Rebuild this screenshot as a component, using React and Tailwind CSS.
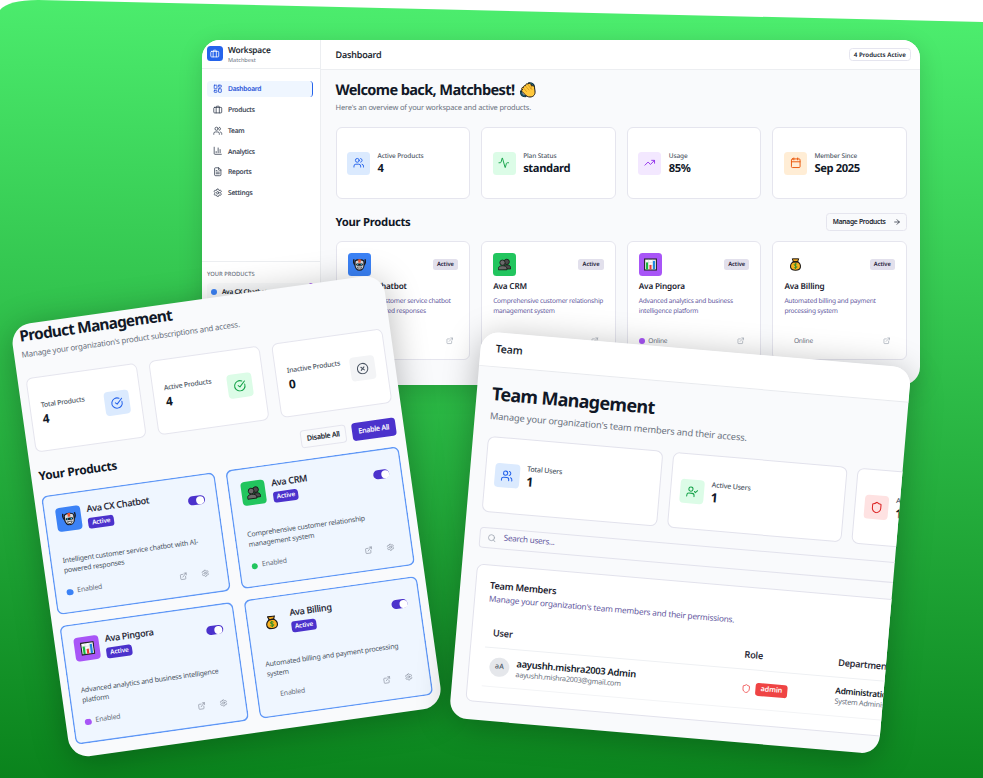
import React from "react";
import {
  Activity, ArrowRight, Calendar, ChartColumn, CircleCheckBig, CircleX,
  ExternalLink, FileText, LayoutDashboard, Search, Settings, Shield, TrendingUp,
  UserCheck, Users,
} from "lucide-react";

function Briefcase({ className }) {
  return (
    <svg viewBox="0 0 24 24" className={className} fill="none" stroke="currentColor" strokeWidth="2" strokeLinecap="round" strokeLinejoin="round">
      <rect x="2" y="6" width="20" height="14" rx="2" />
      <path d="M8 6V5a2 2 0 0 1 2-2h4a2 2 0 0 1 2 2v1M8 6v14M16 6v14" />
    </svg>
  );
}

function WaveEmoji({ className }) {
  return (
    <svg viewBox="0 0 32 32" className={className} strokeLinejoin="round" strokeLinecap="round">
      <path d="M18 3c5-1 10 2 10 8M2 19c0 6 4 9 9 9" fill="none" stroke="#12313f" strokeWidth="4.600" />
      <path d="M20 3c4 0 7 2 7 6M2 21c1 4 3 6 7 7" fill="none" stroke="#2b8fb0" strokeWidth="1.2" />
      <path d="M4 15c-2-3 1-5 3-4 0-3 1-4 4-4 0-3 3-4 5-3 2-2 4-2 6 1l1 3c2-1 6-1 6 3l1 7c1 7-3 12-10 12-4 0-8-2-10-5l-6-6c-1-2-1-3 0-4z" fill="#ffc83d" stroke="#1c1917" strokeWidth="2" />
      <path d="M7 12l6 7M11 8l7 8M16 5l6 9M23 8c-2 3-1 5 1 7" fill="none" stroke="#c98a12" strokeWidth="1.3" />
    </svg>
  );
}

function RobotEmoji({ className }) {
  return (
    <svg viewBox="0 0 32 32" className={className} strokeLinejoin="round">
      <path d="M2.500 3c-2 7 0 13 5 15M29.500 3c2 7 0 13-5 15" fill="none" stroke="#1b1b1f" strokeWidth="3.4" />
      <path d="M5 9c1-4 5-5 11-5s10 1 11 5v9c0 7-5 12-11 12S5 25 5 18z" fill="#d5d9dd" stroke="#17171b" strokeWidth="2.6" />
      <rect x="13" y="3" width="6" height="8.500" fill="#f0552f" />
      <rect x="7.500" y="13.500" width="17" height="5.500" rx="2.700" fill="#17171b" />
      <circle cx="11.500" cy="16.300" r="1.800" fill="#35c9e8" />
      <circle cx="20.500" cy="16.300" r="1.800" fill="#35c9e8" />
      <path d="M10.500 22.500h11l-2.500 4.500h-6z" fill="#fff" stroke="#17171b" strokeWidth="1.4" />
    </svg>
  );
}

function PeopleEmoji({ className }) {
  return (
    <svg viewBox="0 0 32 32" className={className} stroke="#151515" strokeWidth="2" strokeLinejoin="round">
      <circle cx="21.500" cy="9.500" r="6.500" fill="#4a4a4a" />
      <path d="M13 27v-3c0-5 4-7 9-7s9 2 9 7v3z" fill="#4a4a4a" />
      <circle cx="11" cy="11.500" r="6.500" fill="#6a6a6a" />
      <path d="M1 29v-3c0-5 4-7 10-7s11 2 11 7v3z" fill="#6a6a6a" />
    </svg>
  );
}

function ChartEmoji({ className }) {
  return (
    <svg viewBox="0 0 32 32" className={className}>
      <rect x="1.500" y="2.500" width="29" height="27" fill="#fafafa" stroke="#26262b" strokeWidth="2.800" />
      <path d="M3 11h26M3 19h26M11 4v24M21 4v24" stroke="#c9c9cf" strokeWidth="1" />
      <rect x="5" y="11" width="5" height="17" fill="#16b83f" />
      <rect x="13.500" y="17" width="5" height="11" fill="#ee3b32" />
      <rect x="22" y="7" width="5" height="21" fill="#1f86e0" />
    </svg>
  );
}

function MoneyEmoji({ className }) {
  return (
    <svg viewBox="0 0 32 32" className={className} strokeLinejoin="round">
      <path d="M8 2h16l-3 7H11z" fill="#f4a81d" stroke="#1c1917" strokeWidth="2.400" />
      <path d="M11 9C5 13 3 18 4 23c1 5 5 7 12 7s11-2 12-7c1-5-1-10-7-14z" fill="#fbb320" stroke="#1c1917" strokeWidth="2.600" />
      <path d="M9 9.500h14" stroke="#1c1917" strokeWidth="2.600" />
      <path d="M20 16c-1-2-7-2.500-7.500.5s7.500 2.500 7.500 5.500-6 3-8 .8M16 13v14" fill="none" stroke="#1f8b2c" strokeWidth="2" />
    </svg>
  );
}

const PRODUCTS = [
  { name: "Ava CX Chatbot", tile: "bg-[#3b82f6]", dot: "bg-[#3b82f6]", Emoji: RobotEmoji, short: ["Intelligent customer service chatbot", "with AI-powered responses"], long: ["Intelligent customer service chatbot with AI-", "powered responses"] },
  { name: "Ava CRM", tile: "bg-[#22c55e]", dot: "bg-[#22c55e]", Emoji: PeopleEmoji, short: ["Comprehensive customer relationship", "management system"], long: ["Comprehensive customer relationship", "management system"] },
  { name: "Ava Pingora", tile: "bg-[#a855f7]", dot: "bg-[#a855f7]", Emoji: ChartEmoji, short: ["Advanced analytics and business", "intelligence platform"], long: ["Advanced analytics and business intelligence", "platform"] },
  { name: "Ava Billing", tile: "", dot: "", Emoji: MoneyEmoji, short: ["Automated billing and payment", "processing system"], long: ["Automated billing and payment processing", "system"] },
];

const NAV = [
  ["Dashboard", LayoutDashboard],
  ["Products", Briefcase],
  ["Team", Users],
  ["Analytics", ChartColumn],
  ["Reports", FileText],
  ["Settings", Settings],
];

const STATS = [
  ["Active Products", "4", Users, "bg-[#dbeafe] text-[#2563eb]"],
  ["Plan Status", "standard", Activity, "bg-[#dcfce7] text-[#16a34a]"],
  ["Usage", "85%", TrendingUp, "bg-[#f3e8ff] text-[#9333ea]"],
  ["Member Since", "Sep 2025", Calendar, "bg-[#ffedd5] text-[#ea580c]"],
];

const MEDIUM = "font-medium [-webkit-text-stroke:0.12px] ";

function Sidebar() {
  return (
    <aside className="flex w-[119px] shrink-0 flex-col border-r border-[#eceef1] bg-white">
      <div className="flex h-[29px] shrink-0 items-center gap-[5.500px] border-b border-[#eceef1] pl-[5px]">
        <div className="mb-px flex size-[15.500px] items-center justify-center rounded-[3.500px] bg-[#2563eb] text-white">
          <Briefcase className="size-[9.500px]" />
        </div>
        <div className="pt-[2px]">
          <div className={MEDIUM + "text-[8.400px] leading-[10px] tracking-[-0.02em] text-[#111827]"}>Workspace</div>
          <div className="text-[5.600px] leading-[9px] text-[#6b7280]">Matchbest</div>
        </div>
      </div>
      <nav className="flex flex-col gap-[3.950px] pt-[11.500px] pr-[7.500px] pl-[5px]">
        {NAV.map(([label, Icon], i) => (
          <div
            key={label}
            className={
              MEDIUM + "flex h-[16.800px] items-center gap-[5.500px] rounded-[3.500px] pl-[6px] text-[6.700px] tracking-[-0.03em] " +
              (i === 0 ? "border-r border-[#2563eb] bg-[#eff6ff] text-[#1d4ed8]" : "text-[#374151]")
            }
          >
            <Icon className="size-[9.500px]" />
            <span className="pt-px">{label}</span>
          </div>
        ))}
      </nav>
      <div className="mt-[60px] flex-1 border-t border-[#eceef1] pt-[7px] pr-[7.500px] pl-[5px]">
        <div className="text-[5.800px] leading-[10px] font-medium text-[#6b7280]">YOUR PRODUCTS</div>
        <div className="mt-[4px] flex h-[18px] rounded-[3.500px] bg-[#f9fafb] pl-[4px]">
          <span className="mt-[6px] size-[6px] rounded-full bg-[#3b82f6]" />
          <span className="ml-[5px] flex-1 text-[6.500px] leading-[18px] font-semibold tracking-[-0.04em] text-[#111827]">Ava CX Chatbot</span>
          <span className="size-[4px] rounded-full bg-[#9333ea]" />
        </div>
      </div>
    </aside>
  );
}

function Dashboard() {
  return (
    <section className="absolute top-[40px] left-[202px] flex h-[344.500px] w-[718px] overflow-hidden rounded-[18px] bg-[#f9fafc]">
      <Sidebar />
      <main className="flex-1">
        <header className="flex h-[29.500px] items-center justify-between border-b border-[#eceef1] bg-white pr-[9px] pl-[14.500px]">
          <h2 className={MEDIUM + "text-[9px] tracking-[-0.015em] text-[#111827]"}>Dashboard</h2>
          <span className="flex h-[13px] items-center rounded-[3.500px] border border-[#e5e5ef] px-[4.200px] text-[6.200px] font-semibold text-[#0f172a]">4 Products Active</span>
        </header>
        <div className="pr-[13px] pl-[14.500px]">
          <div className="mt-[10px] flex h-[20px] items-center gap-[6px] pt-px">
            <h1 className="text-[14.600px] leading-[20px] font-bold tracking-[-0.044em] text-[#111827]">Welcome back, Matchbest!</h1>
            <WaveEmoji className="size-[16px]" />
          </div>
          <p className="mt-[3px] text-[7.500px] leading-[10px] tracking-[-0.024em] text-[#6b7280]">Here's an overview of your workspace and active products.</p>
          <div className="mt-[14.500px] grid grid-cols-4 gap-[11px]">
            {STATS.map(([label, value, Icon, tint]) => (
              <div key={label} className="flex h-[72px] items-center gap-[7.500px] rounded-[6px] border border-[#e5e5ee] bg-white px-[10.500px]">
                <div className={"flex size-[23px] items-center justify-center rounded-[3.500px] " + tint}>
                  <Icon className="size-[11.500px]" />
                </div>
                <div className="pt-px">
                  <div className="text-[6.500px] leading-[10px] font-medium tracking-[-0.02em] text-[#4b5563]">{label}</div>
                  <div className="text-[11.200px] leading-[15px] font-bold tracking-[-0.034em] text-[#111827]">{value}</div>
                </div>
              </div>
            ))}
          </div>
          <div className="mt-[14px] flex items-center justify-between">
            <h2 className="pt-[2px] text-[11.300px] leading-[16px] font-bold tracking-[-0.025em] text-[#111827]">Your Products</h2>
            <button className={MEDIUM + "flex h-[18px] items-center gap-[7px] rounded-[3.500px] border border-[#e5e5ee] px-[5.500px] text-[6.700px] tracking-[-0.033em] text-[#111827]"}>
              Manage Products
              <ArrowRight className="size-[8px]" />
            </button>
          </div>
          <div className="mt-[10px] grid grid-cols-4 gap-[11px]">
            {PRODUCTS.map(({ name, tile, dot, Emoji, short }) => (
              <div key={name} className="h-[119px] rounded-[6px] border border-[#e5e5ee] bg-white px-[11px] pt-[11px]">
                <div className="flex items-center justify-between">
                  <div className={"flex size-[23px] items-center justify-center rounded-[3.500px] " + tile}>
                    <Emoji className="size-[13px]" />
                  </div>
                  <span className="flex h-[10.500px] items-center rounded-[2.500px] bg-[#e2e0ec] px-[4.300px] text-[5.800px] font-semibold tracking-[-0.015em] text-[#1e1b3a]">Active</span>
                </div>
                <h3 className="mt-[4.500px] text-[8.200px] leading-[12px] font-semibold tracking-[-0.02em] text-[#1a1a2e]">{name}</h3>
                <div className="mt-[3.500px] text-[6.600px] leading-[9.500px] tracking-[-0.035em] whitespace-nowrap text-[#6459a0]">
                  {short.map((line) => <div key={line}>{line}</div>)}
                </div>
                <div className="mt-[20px] flex h-[12px] items-center">
                  <span className={"size-[6px] rounded-full " + dot} />
                  <span className="ml-[3.500px] flex-1 text-[6.600px] tracking-[-0.035em] text-[#6b7280]">Online</span>
                  <ExternalLink className="mr-[5px] size-[7.500px] text-[#9ca3af]" />
                </div>
              </div>
            ))}
          </div>
        </div>
      </main>
    </section>
  );
}

const PM_STATS = [
  ["Total Products", "4", CircleCheckBig, "bg-[#dbeafe] text-[#2563eb]"],
  ["Active Products", "4", CircleCheckBig, "bg-[#dcfce7] text-[#16a34a]"],
  ["Inactive Products", "0", CircleX, "bg-[#f3f4f6] text-[#4b5563]"],
];

function ProductManagement() {
  return (
    <section className="absolute top-[326.300px] left-[9.600px] h-[437px] w-[376.300px] origin-top-left -rotate-8 overflow-hidden rounded-[20px] bg-[#f9fafc] pt-[2px] pr-[8.300px] pl-[7.500px] shadow-[0_5px_34px_rgba(0,0,0,0.28)]">
      <h1 className="pl-[0.500px] text-[15.400px] leading-[20px] font-bold tracking-[-0.047em] text-[#111827]">Product Management</h1>
      <p className="mt-[3.500px] text-[8px] leading-[10px] tracking-[-0.028em] text-[#6b7280]">Manage your organization's product subscriptions and access.</p>
      <div className="mt-[18px] grid grid-cols-3 gap-[12.200px]">
        {PM_STATS.map(([label, value, Icon, tint]) => (
          <div key={label} className="flex h-[75px] items-center justify-between rounded-[6.500px] border border-[#e5e5ee] bg-white px-[11px]">
            <div>
              <div className="text-[6.900px] leading-[10px] font-medium tracking-[-0.03em] whitespace-nowrap text-[#4b5563]">{label}</div>
              <div className="text-[12px] leading-[15px] font-bold text-[#111827]">{value}</div>
            </div>
            <div className={"flex size-[24.500px] shrink-0 items-center justify-center rounded-[4px] " + tint}>
              <Icon className="size-[12.500px]" />
            </div>
          </div>
        ))}
      </div>
      <div className="mt-[15px] flex h-[18px] items-center">
        <h2 className="flex-1 text-[12px] leading-[18px] font-bold tracking-[-0.03em] text-[#111827]">Your Products</h2>
        <button className={MEDIUM + "mr-[6px] h-[18px] w-[46px] rounded-[3.500px] border border-[#e5e5ee] text-[7.100px] tracking-[-0.03em] text-[#111827]"}>Disable All</button>
        <button className={MEDIUM + "h-[18px] w-[44px] rounded-[3.500px] bg-[#4b32cc] text-[7.100px] tracking-[-0.03em] text-white"}>Enable All</button>
      </div>
      <div className="mt-[11px] -ml-[0.900px] grid grid-cols-2 gap-x-[11.500px] gap-y-[11px]">
        {PRODUCTS.map(({ name, tile, dot, Emoji, long }) => (
          <div key={name} className="h-[120px] rounded-[6.500px] bg-[#eff6ff] px-[12.800px] pt-[13.500px] ring-[1.400px] ring-[#5f97f6] ring-inset">
            <div className="flex items-center">
              <div className={"flex size-[24.500px] items-center justify-center rounded-[4px] " + tile}>
                <Emoji className="size-[14px]" />
              </div>
              <div className="ml-[6.500px] flex-1">
                <h3 className={MEDIUM + "text-[9px] leading-[12px] tracking-[-0.025em] text-[#1a1a2e]"}>{name}</h3>
                <span className="mt-[2.500px] flex h-[11.300px] w-[25.500px] items-center justify-center rounded-[3px] bg-[#4b32cc] text-[6.400px] font-semibold tracking-[-0.02em] text-white">Active</span>
              </div>
              <span className="flex h-[9.200px] w-[16.500px] items-center justify-end rounded-full bg-[#4b32cc] pr-[0.700px]">
                <span className="size-[7.800px] rounded-full bg-white" />
              </span>
            </div>
            <div className="mt-[24.500px] text-[7px] leading-[10px] tracking-[-0.027em] whitespace-nowrap text-[#4b5563]">
              {long.map((line) => <div key={line}>{line}</div>)}
            </div>
            <div className="mt-[9.500px] flex h-[12px] items-center">
              <span className={"size-[6.500px] rounded-full " + dot} />
              <span className="ml-[4px] flex-1 text-[7px] tracking-[-0.03em] text-[#6b7280]">Enabled</span>
              <ExternalLink className="size-[8px] text-[#8b93a1]" />
              <Settings className="mr-[5.500px] ml-[14px] size-[8px] text-[#8b93a1]" />
            </div>
          </div>
        ))}
      </div>
    </section>
  );
}

const TEAM_STATS = [
  ["Total Users", "1", Users, "bg-[#dbeafe] text-[#2563eb]"],
  ["Active Users", "1", UserCheck, "bg-[#dcfce7] text-[#16a34a]"],
  ["Admins", "1", Shield, "bg-[#fee2e2] text-[#dc2626]"],
];

function TeamManagement() {
  return (
    <section className="absolute top-[331px] left-[481.500px] h-[388.300px] w-[431px] origin-top-left rotate-[4.900deg] overflow-hidden rounded-[18px] bg-[#f9fafc] shadow-[0_5px_34px_rgba(0,0,0,0.28)]">
      <header className={MEDIUM + "flex h-[34.500px] items-center border-b border-[#e8eaee] bg-white pt-[2px] pl-[15.200px] text-[10.500px] text-[#111827]"}>Team</header>
      <div className="w-[561px] pl-[15.300px]">
        <h1 className="mt-[15px] text-[18px] leading-[24px] font-bold tracking-[-0.036em] text-[#111827]">Team Management</h1>
        <p className="mt-[4px] text-[9.300px] leading-[12px] tracking-[-0.016em] text-[#6b7280]">Manage your organization's team members and their access.</p>
        <div className="mt-[14.500px] grid grid-cols-3 gap-[10px]">
          {TEAM_STATS.map(([label, value, Icon, tint]) => (
            <div key={label} className="flex h-[76px] items-center gap-[7px] rounded-[7px] border border-[#e2e2ec] bg-white px-[9px]">
              <div className={"flex size-[24.500px] items-center justify-center rounded-[4px] " + tint}>
                <Icon className="size-[12.500px]" />
              </div>
              <div>
                <div className="text-[7.100px] leading-[10px] font-medium tracking-[-0.03em] text-[#4b5563]">{label}</div>
                <div className="text-[12.600px] leading-[16px] font-bold text-[#111827]">{value}</div>
              </div>
            </div>
          ))}
        </div>
        <div className="mt-[14.500px] flex h-[21px] items-center gap-[7.500px] rounded-[4px] border border-[#e2e2ec] pl-[6.500px] text-[8.200px] tracking-[-0.035em] text-[#6459a0]">
          <Search className="size-[9px] text-[#9ca3af]" />
          Search users...
        </div>
        <div className="mt-[16px] h-[138px] rounded-[7px] border border-[#e2e2ec] bg-white pl-[13.500px]">
          <h2 className="mt-[13px] text-[9.300px] leading-[14px] font-semibold tracking-[-0.03em] text-[#1a1a2e]">Team Members</h2>
          <p className="mt-[1.500px] text-[8.300px] leading-[12px] tracking-[-0.026em] text-[#6459a0]">Manage your organization's team members and their permissions.</p>
          <div className={MEDIUM + "mt-[13.500px] flex h-[28px] items-center border-b border-[#eef0f3] pl-[7px] text-[9.100px] tracking-[-0.015em] text-[#1a1a2e]"}>
            <span className="w-[252.500px]">User</span>
            <span className="w-[94px]">Role</span>
            <span>Department</span>
          </div>
          <div className="flex h-[39px] items-center border-b border-[#f3f4f6] pl-[6.500px]">
            <span className="flex size-[19.500px] items-center justify-center rounded-full bg-[#e5e7eb] text-[7.200px] font-medium text-[#4b5563]">aA</span>
            <div className="ml-[7px] w-[226px]">
              <div className="text-[9.400px] leading-[13px] font-semibold tracking-[-0.03em] text-[#111827]">aayushh.mishra2003 Admin</div>
              <div className="text-[7.300px] leading-[11px] tracking-[-0.04em] text-[#6b7280]">aayushh.mishra2003@gmail.com</div>
            </div>
            <Shield className="size-[9.500px] text-[#ef4444]" />
            <span className="ml-[5px] flex h-[13px] w-[31.500px] items-center justify-center rounded-[3px] bg-[#ef4444] text-[7.200px] font-semibold tracking-[-0.02em] text-white">admin</span>
            <div className="ml-[48px]">
              <div className="text-[8.400px] leading-[11px] font-semibold tracking-[-0.04em] text-[#111827]">Administration</div>
              <div className="text-[7.300px] leading-[10px] tracking-[-0.04em] text-[#6b7280]">System Administrator</div>
            </div>
          </div>
        </div>
      </div>
    </section>
  );
}

export default function App() {
  return (
    <div className="relative h-[778px] w-[983px] overflow-hidden bg-white font-['Noto_Sans','Open_Sans',sans-serif] [text-rendering:geometricPrecision]">
      <div className="absolute inset-0 bg-linear-[182deg,#4ef070_0%,#0a831c_100%] [clip-path:path('M0_10_Q8_0_38_0_L983_22_V778_H0_Z')]" />
      <div className="absolute top-[40px] left-[202px] h-[344.500px] w-[718px] rounded-[18px] shadow-[0_6px_24px_rgba(0,0,0,0.15)]" />
      <Dashboard />
      <ProductManagement />
      <TeamManagement />
    </div>
  );
}
